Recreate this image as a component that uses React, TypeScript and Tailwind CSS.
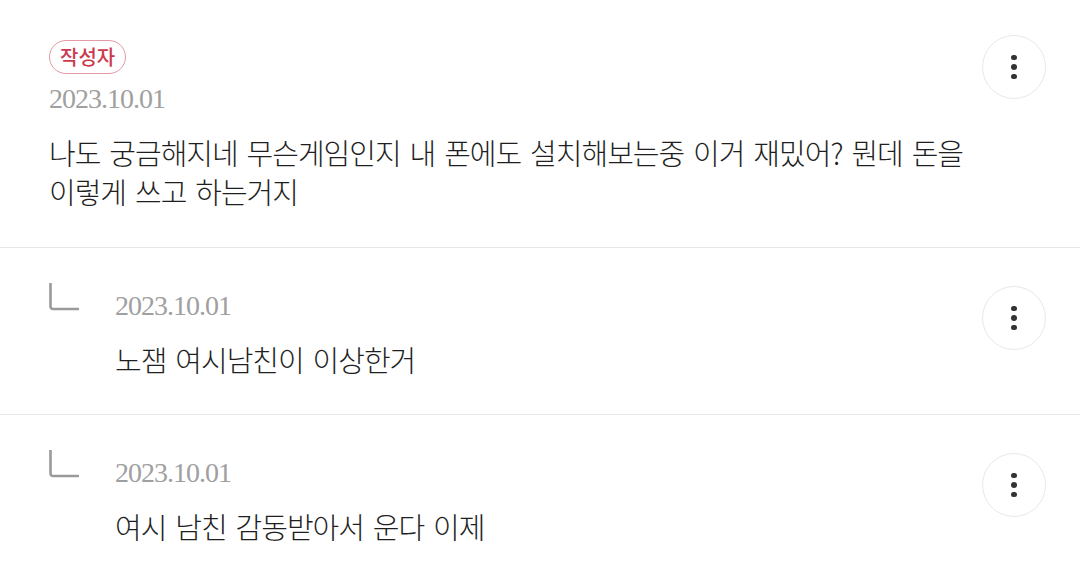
import React from "react";

type Comment = {
  id: number;
  date: string;
  text: string;
  isAuthor?: boolean;
  isReply?: boolean;
};

const comments: Comment[] = [
  {
    id: 1,
    date: "2023.10.01",
    text: "나도 궁금해지네 무슨게임인지 내 폰에도 설치해보는중 이거 재밌어? 뭔데 돈을 이렇게 쓰고 하는거지",
    isAuthor: true,
  },
  { id: 2, date: "2023.10.01", text: "노잼 여시남친이 이상한거", isReply: true },
  { id: 3, date: "2023.10.01", text: "여시 남친 감동받아서 운다 이제", isReply: true },
];

const bodyFont = {
  fontFamily: '"Noto Sans CJK KR", "Noto Sans", sans-serif',
};

function ReplyCorner() {
  return (
    <svg width="30" height="28" viewBox="0 0 30 28" fill="none" className="shrink-0">
      <path
        d="M1.5 0 V23.5 a2.5 2.5 0 0 0 2.5 2.5 H29"
        stroke="#9a9a9a"
        strokeWidth="2.6"
        strokeLinecap="round"
      />
    </svg>
  );
}

function MoreButton() {
  return (
    <button
      type="button"
      className="flex h-[64px] w-[64px] shrink-0 flex-col items-center justify-center gap-[4px] rounded-full border-[1.5px] border-[#e8e8e8] bg-white"
    >
      <span className="h-[5.5px] w-[5.5px] rounded-full bg-[#333333]" />
      <span className="h-[5.5px] w-[5.5px] rounded-full bg-[#333333]" />
      <span className="h-[5.5px] w-[5.5px] rounded-full bg-[#333333]" />
    </button>
  );
}

function DateLine({ date }: { date: string }) {
  return (
    <div
      className="h-[28px] text-[28px] leading-[28px] tracking-[-1px] text-[#a0a0a0]"
      style={{ fontFamily: '"Liberation Serif", serif' }}
    >
      {date}
    </div>
  );
}

function Body({ text }: { text: string }) {
  return (
    <p
      className="mt-[20px] max-w-[945px] text-[29px] font-light leading-[39px] tracking-[-1px] text-[#1f1f1f] [word-spacing:3.5px]"
      style={bodyFont}
    >
      {text}
    </p>
  );
}

function AuthorComment({ c }: { c: Comment }) {
  return (
    <div className="flex border-b border-[#e6e6e6] pb-[36px] pl-[49px] pr-[34px] pt-[35px]">
      <div className="min-w-0 flex-1 pt-[5px]">
        <span
          className="inline-flex h-[34px] items-center rounded-full border-[1.5px] border-[#e39aa1] px-[10px] pb-[1px] text-[20px] font-medium leading-none text-[#cc3a4d]"
          style={bodyFont}
        >
          작성자
        </span>
        <div className="mt-[11px]">
          <DateLine date={c.date} />
        </div>
        <Body text={c.text} />
      </div>
      <MoreButton />
    </div>
  );
}

function ReplyComment({ c, last }: { c: Comment; last?: boolean }) {
  return (
    <div
      className={
        last
          ? "flex pb-[35px] pl-[49px] pr-[34px] pt-[35px]"
          : "flex border-b border-[#e6e6e6] pb-[35px] pl-[49px] pr-[34px] pt-[35px]"
      }
    >
      <div className="w-[66px] shrink-0">
        <ReplyCorner />
      </div>
      <div className="min-w-0 flex-1 pt-[9px]">
        <DateLine date={c.date} />
        <Body text={c.text} />
      </div>
      <div className="pt-[3px]">
        <MoreButton />
      </div>
    </div>
  );
}

export default function App() {
  return (
    <div className="h-[584px] w-[1080px] overflow-hidden bg-white">
      {comments.map((c, i) =>
        c.isReply ? (
          <ReplyComment key={c.id} c={c} last={i === comments.length - 1} />
        ) : (
          <AuthorComment key={c.id} c={c} />
        )
      )}
    </div>
  );
}
